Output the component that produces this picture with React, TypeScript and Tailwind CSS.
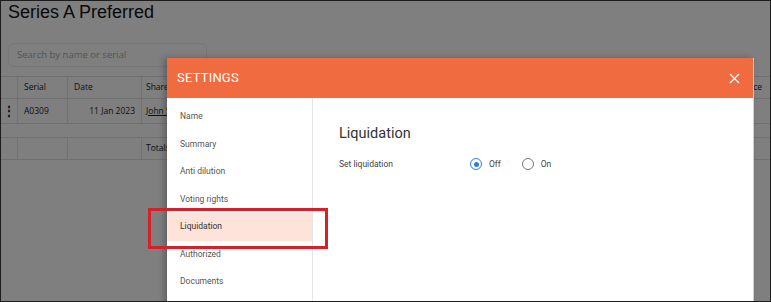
import { X } from "lucide-react";

const navItems = [
  "Name",
  "Summary",
  "Anti dilution",
  "Voting rights",
  "Liquidation",
  "Authorized",
  "Documents",
];

function Radio({ checked, label }: { checked: boolean; label: string }) {
  return (
    <label className="flex items-center gap-[7px]">
      <span
        className={
          checked
            ? "flex size-[12px] items-center justify-center rounded-full border-[1.5px] border-[#2f7fd0]"
            : "flex size-[12px] items-center justify-center rounded-full border border-[#777]"
        }
      >
        {checked && <span className="size-[5px] rounded-full bg-[#2f7fd0]" />}
      </span>
      <span className="text-[8.5px] text-[#444]">{label}</span>
    </label>
  );
}

function SharesTable() {
  const cell = "border-r border-[#e2e2e2] px-[6px] flex items-center";
  return (
    <div className="mt-[9px] border-t border-[#e2e2e2] font-['Open_Sans',sans-serif] text-[8.5px] text-[#222]">
      {/* header */}
      <div className="grid h-[22px] grid-cols-[17px_50px_74px_1fr_60px] border-b border-[#e2e2e2]">
        <div className={cell} />
        <div className={cell}>Serial</div>
        <div className={cell}>Date</div>
        <div className="flex items-center px-[4px]">Shares</div>
        <div className="flex items-center justify-end pr-[8px]">Balance</div>
      </div>
      {/* row */}
      <div className="grid h-[25px] grid-cols-[17px_50px_74px_1fr_60px] border-b border-[#e2e2e2]">
        <div className={cell + " justify-center text-[12px] font-bold leading-none"}>⋮</div>
        <div className={cell}>A0309</div>
        <div className={cell + " justify-end"}>11 Jan 2023</div>
        <div className="flex items-center px-[4px]">
          <span className="underline">John Smith</span>
        </div>
        <div />
      </div>
      <div className="h-[14px] border-b border-[#e2e2e2]" />
      {/* totals */}
      <div className="grid h-[22px] grid-cols-[17px_50px_74px_1fr_60px] border-b border-[#e2e2e2]">
        <div className={cell} />
        <div className={cell} />
        <div className={cell} />
        <div className="flex items-center px-[4px]">Totals</div>
        <div />
      </div>
    </div>
  );
}

export default function App() {
  return (
    <div className="relative h-[302px] w-[771px] overflow-hidden border border-[#1c1c1c] bg-white">
      {/* page underneath */}
      <div>
        <h1 className="mt-[1px] px-[7px] font-['Liberation_Sans',Arial,sans-serif] text-[18px] leading-[20px] text-[#111]">
          Series A Preferred
        </h1>
        <div className="mt-[21px] ml-[7px] flex h-[24px] w-[199px] items-center rounded-[6px] border border-[#ececec] bg-white px-[8px] font-['Open_Sans',sans-serif] text-[9.5px] text-[#aaa]">
          Search by name or serial
        </div>
        <SharesTable />
      </div>

      {/* backdrop */}
      <div className="absolute inset-0 bg-black/50" />

      {/* settings modal */}
      <div className="absolute top-[57px] left-[166px] w-[587px] border-r border-[#cfcfcf] bg-white font-['Roboto',sans-serif] shadow-[-3px_0_6px_rgba(0,0,0,0.25)]">
        <div className="flex h-[40px] items-center justify-between bg-[#f06b40] pr-[10px] pl-[10px]">
          <span className="text-[13px] tracking-[0.2px] text-white">SETTINGS</span>
          <X className="size-[17px] text-white" strokeWidth={1.6} />
        </div>
        <div className="flex h-[220px]">
          <nav className="w-[146px] shrink-0 border-r border-[#e6e6e6] pt-[5px]">
            {navItems.map((item) => (
              <div
                key={item}
                className={
                  item === "Liquidation"
                    ? "flex h-[27.5px] items-center bg-[#fde3da] pl-[13px] text-[8.5px] text-[#333]"
                    : "flex h-[27.5px] items-center pl-[13px] text-[8.5px] text-[#555]"
                }
              >
                {item}
              </div>
            ))}
          </nav>
          <div className="flex-1 pt-[26px] pl-[26px]">
            <h2 className="text-[14.5px] leading-[20px] text-[#333]">Liquidation</h2>
            <div className="mt-[14px] flex items-center">
              <span className="w-[131px] text-[8.5px] text-[#444]">Set liquidation</span>
              <div className="flex items-center gap-[21px]">
                <Radio checked label="Off" />
                <Radio checked={false} label="On" />
              </div>
            </div>
          </div>
        </div>
      </div>

      {/* highlight annotation */}
      <div className="absolute top-[207px] left-[147px] h-[41px] w-[180px] border-[3px] border-[#d3222a]" />
    </div>
  );
}
